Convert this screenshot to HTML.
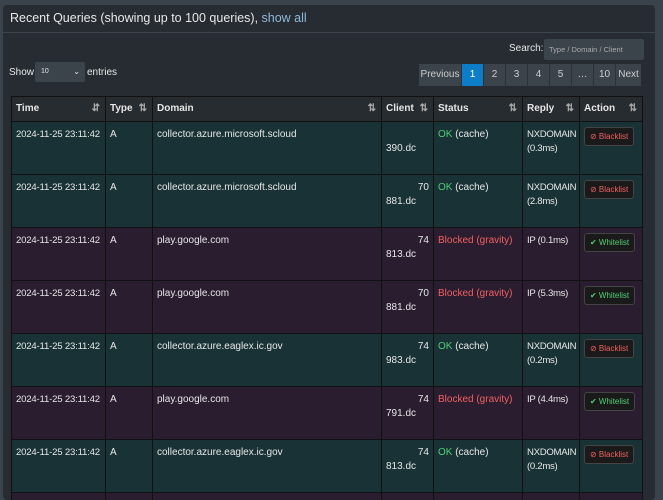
<!DOCTYPE html><html style="overflow:hidden"><head><style>
body{margin:0;background:#3a424b;width:663px;height:500px;overflow:hidden;font-family:"Liberation Sans",sans-serif;font-size:10px;color:#e6e6e6;position:relative}
.box{position:absolute;left:3px;top:5px;width:652px;height:495px;background:#262c31;border-radius:4px;overflow:hidden}
.hd{height:27px;border-bottom:1px solid #3c444c;font-size:12.5px;line-height:26px;padding-left:7px;color:#e8e8e8}
.hd a{color:#8fb8da}
.abs{position:absolute}
.inp{background:#3b434b;border-radius:2px}
table{position:absolute;left:8px;top:91px;width:631px;border-collapse:collapse;table-layout:fixed}
td,th{border:1px solid #111;vertical-align:top;padding:6px 4px;text-align:left;white-space:nowrap;overflow:hidden;line-height:14px}
th{height:12px;line-height:12px;font-size:10px;font-weight:bold;background:#272c30;padding:6px 4px;position:relative}
th span{position:absolute;right:5px;top:6px;color:#aaa;font-size:10px}
tr.g td{background:#193235;height:40px}
tr.p td{background:#291d2f;height:40px}
.ok{color:#4fcf75}.bl{color:#f16060}
.btn{display:inline-block;border:1px solid #444;background:#1a1a1a;border-radius:3px;padding:0 5px;height:17px;line-height:17px;font-size:8px;margin-top:-1px}
.r{text-align:right}
.t{font-size:9.6px;letter-spacing:-0.2px}
.rp{font-size:9.6px;letter-spacing:-0.3px}
</style></head><body>
<div class="box">
<div class="hd">Recent Queries (showing up to 100 queries), <a>show all</a></div>
<div class="abs" style="left:506px;top:38px;font-size:10px">Search:</div>
<div class="abs inp" style="left:541px;top:34px;width:100px;height:21px;font-size:7.5px;line-height:21px;padding-left:5px;color:#aaa;box-sizing:border-box">Type / Domain / Client</div>
<div class="abs" style="left:6px;top:62px">Show</div>
<div class="abs inp" style="left:32px;top:57px;width:50px;height:20px;font-size:7px;line-height:20px;padding-left:6px;box-sizing:border-box">10<span style="position:absolute;right:5px;font-size:8px">⌄</span></div>
<div class="abs" style="left:84px;top:62px">entries</div>
<div class="abs" style="left:416px;top:59px;height:22px;display:flex;font-size:10px;line-height:22px;text-align:center;color:#ccc">
<div style="width:42px;background:#3b434b;border-right:1px solid #2c3238">Previous</div>
<div style="width:21px;background:#0b7dc9;color:#fff">1</div>
<div style="width:21px;background:#3b434b;border-left:1px solid #2c3238">2</div>
<div style="width:21px;background:#3b434b;border-left:1px solid #2c3238">3</div>
<div style="width:21px;background:#3b434b;border-left:1px solid #2c3238">4</div>
<div style="width:21px;background:#3b434b;border-left:1px solid #2c3238">5</div>
<div style="width:21px;background:#3b434b;border-left:1px solid #2c3238">…</div>
<div style="width:21px;background:#3b434b;border-left:1px solid #2c3238">10</div>
<div style="width:25px;background:#3b434b;border-left:1px solid #2c3238">Next</div>
</div>
<table>
<colgroup><col style="width:94px"><col style="width:47px"><col style="width:229px"><col style="width:52px"><col style="width:89px"><col style="width:57px"><col style="width:63px"></colgroup>
<tr><th>Time<span>⇵</span></th><th>Type<span>⇅</span></th><th>Domain<span>⇅</span></th><th>Client<span>⇅</span></th><th>Status<span>⇅</span></th><th>Reply<span>⇅</span></th><th>Action<span>⇅</span></th></tr>
<tr class="g"><td class="t">2024-11-25 23:11:42</td><td>A</td><td>collector.azure.microsoft.scloud</td><td><br>390.dc</td><td><span class="ok">OK</span> (cache)</td><td class="rp">NXDOMAIN<br>(0.3ms)</td><td><span class="btn bl">⊘ Blacklist</span></td></tr>
<tr class="g"><td class="t">2024-11-25 23:11:42</td><td>A</td><td>collector.azure.microsoft.scloud</td><td><div class="r">70</div>881.dc</td><td><span class="ok">OK</span> (cache)</td><td class="rp">NXDOMAIN<br>(2.8ms)</td><td><span class="btn bl">⊘ Blacklist</span></td></tr>
<tr class="p"><td class="t">2024-11-25 23:11:42</td><td>A</td><td>play.google.com</td><td><div class="r">74</div>813.dc</td><td class="bl">Blocked (gravity)</td><td class="rp">IP (0.1ms)</td><td><span class="btn ok">✔ Whitelist</span></td></tr>
<tr class="p"><td class="t">2024-11-25 23:11:42</td><td>A</td><td>play.google.com</td><td><div class="r">70</div>881.dc</td><td class="bl">Blocked (gravity)</td><td class="rp">IP (5.3ms)</td><td><span class="btn ok">✔ Whitelist</span></td></tr>
<tr class="g"><td class="t">2024-11-25 23:11:42</td><td>A</td><td>collector.azure.eaglex.ic.gov</td><td><div class="r">74</div>983.dc</td><td><span class="ok">OK</span> (cache)</td><td class="rp">NXDOMAIN<br>(0.2ms)</td><td><span class="btn bl">⊘ Blacklist</span></td></tr>
<tr class="p"><td class="t">2024-11-25 23:11:42</td><td>A</td><td>play.google.com</td><td><div class="r">74</div>791.dc</td><td class="bl">Blocked (gravity)</td><td class="rp">IP (4.4ms)</td><td><span class="btn ok">✔ Whitelist</span></td></tr>
<tr class="g"><td class="t">2024-11-25 23:11:42</td><td>A</td><td>collector.azure.eaglex.ic.gov</td><td><div class="r">74</div>813.dc</td><td><span class="ok">OK</span> (cache)</td><td class="rp">NXDOMAIN<br>(0.2ms)</td><td><span class="btn bl">⊘ Blacklist</span></td></tr>
<tr class="p"><td>&nbsp;</td><td></td><td></td><td></td><td></td><td></td><td></td></tr>
</table>
</div>
</body></html>
